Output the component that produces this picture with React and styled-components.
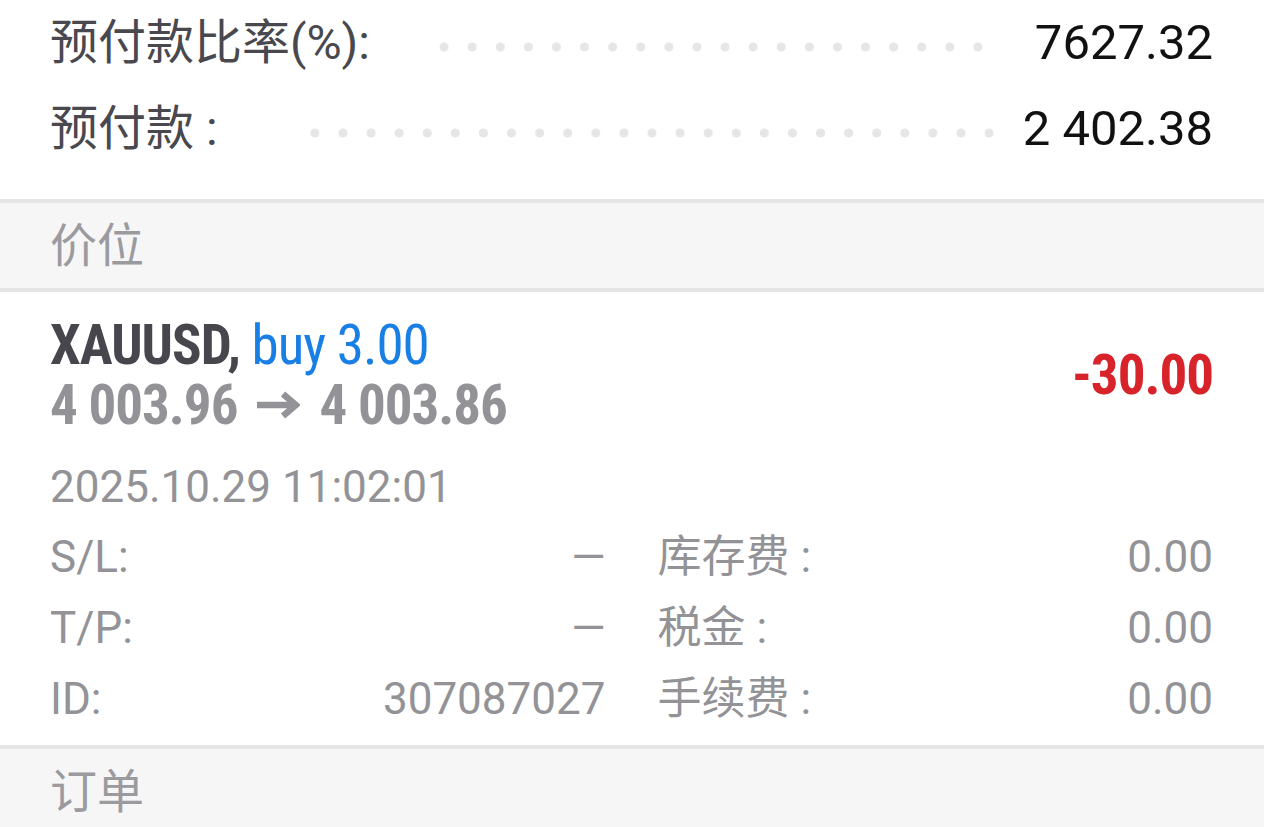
import React from "react";
import styled, { createGlobalStyle } from "styled-components";

const GlobalStyle = createGlobalStyle`
  html, body { margin: 0; padding: 0; background: #ffffff; overflow: hidden; }
  body {
    font-family: Roboto, "Noto Sans CJK SC", sans-serif;
    -webkit-font-smoothing: antialiased;
  }
`;

const Page = styled.div`
  width: 1264px;
  display: flex;
  flex-direction: column;
`;

const Summary = styled.section`
  display: flex;
  flex-direction: column;
  padding: 0 51px 27px 50px;
`;

const SumRow = styled.div`
  display: flex;
  align-items: center;
  height: 86px;
  line-height: 86px;
  font-size: 48px;
  white-space: nowrap;
`;

const SumLabel = styled.span`
  color: #48484e;
`;

const Leader = styled.span`
  flex: 1;
  align-self: stretch;
  margin-left: ${(p) => p.$ml}px;
  margin-right: ${(p) => p.$mr}px;
  background-image: radial-gradient(circle, #e6e6e6 4.3px, transparent 4.8px);
  background-size: 28.1px 28px;
  background-repeat: repeat-x;
  background-position: right ${(p) => p.$dy}px;
`;

const SumValue = styled.span`
  color: #111111;
  font-size: 49px;
`;

const SectionHeader = styled.div`
  border-top: 4px solid #e5e5e5;
  border-bottom: 4px solid #e5e5e5;
  background: #f6f6f6;
  height: 85px;
  line-height: 85px;
  padding-left: 50px;
  font-size: 47px;
  color: #9a9a9f;
`;

const Position = styled.section`
  display: flex;
  flex-direction: column;
  padding: 23px 51px 10px 50px;
`;

const PosHead = styled.div`
  display: flex;
  align-items: center;
  justify-content: space-between;
`;

const PosTitle = styled.div`
  display: flex;
  flex-direction: column;
  font-size: 55px;
  line-height: 60px;
  font-stretch: 75%;
  letter-spacing: -1px;
  white-space: nowrap;
`;

const Symbol = styled.span`
  font-weight: 700;
  color: #46464c;
`;

const Side = styled.span`
  font-weight: 400;
  color: #1a7fe4;
`;

const Prices = styled.div`
  font-weight: 700;
  color: #939397;
`;

const ArrowIcon = styled.svg`
  width: 44px;
  height: 28px;
  margin: 0 19px;
  vertical-align: 5px;
`;

const Profit = styled.div`
  font-size: 55px;
  line-height: 60px;
  font-weight: 700;
  font-stretch: 75%;
  letter-spacing: -1px;
  color: #d8232a;
`;

const Time = styled.div`
  font-size: 44px;
  line-height: 64px;
  color: #939397;
  margin: 20px 0 3px;
`;

const Details = styled.div`
  display: grid;
  grid-template-columns: 1fr 1fr;
  column-gap: 52px;
`;

const DetailCell = styled.div`
  display: flex;
  justify-content: space-between;
  align-items: baseline;
  font-size: 44px;
  line-height: 71px;
  height: 71px;
  color: #939397;
  white-space: nowrap;
`;

const summary = [
  { label: "预付款比率(%):", value: "7627.32", ml: 55, mr: 43 },
  { label: "预付款 :", value: "2 402.38", ml: 88, mr: 20 },
];

const details = [
  ["S/L:", "—", "库存费 :", "0.00"],
  ["T/P:", "—", "税金 :", "0.00"],
  ["ID:", "307087027", "手续费 :", "0.00"],
];

function Arrow() {
  return (
    <ArrowIcon viewBox="0 0 44 28" aria-hidden="true">
      <path
        d="M1 14 H40 M27 3 L40 14 L27 25"
        fill="none"
        stroke="currentColor"
        strokeWidth="6.5"
        strokeLinejoin="miter"
      />
    </ArrowIcon>
  );
}

export default function App() {
  return (
    <>
      <GlobalStyle />
      <Page>
        <Summary>
          {summary.map((r) => (
            <SumRow key={r.label}>
              <SumLabel>{r.label}</SumLabel>
              <Leader $ml={r.ml} $mr={r.mr} $dy={33} />
              <SumValue>{r.value}</SumValue>
            </SumRow>
          ))}
        </Summary>
        <SectionHeader>价位</SectionHeader>
        <Position>
          <PosHead>
            <PosTitle>
              <div>
                <Symbol>XAUUSD,</Symbol> <Side>buy 3.00</Side>
              </div>
              <Prices>
                4 003.96
                <Arrow />
                4 003.86
              </Prices>
            </PosTitle>
            <Profit>-30.00</Profit>
          </PosHead>
          <Time>2025.10.29 11:02:01</Time>
          <Details>
            {details.map((d) => (
              <React.Fragment key={d[0]}>
                <DetailCell>
                  <span>{d[0]}</span>
                  <span>{d[1]}</span>
                </DetailCell>
                <DetailCell>
                  <span>{d[2]}</span>
                  <span>{d[3]}</span>
                </DetailCell>
              </React.Fragment>
            ))}
          </Details>
        </Position>
        <SectionHeader>订单</SectionHeader>
      </Page>
    </>
  );
}
